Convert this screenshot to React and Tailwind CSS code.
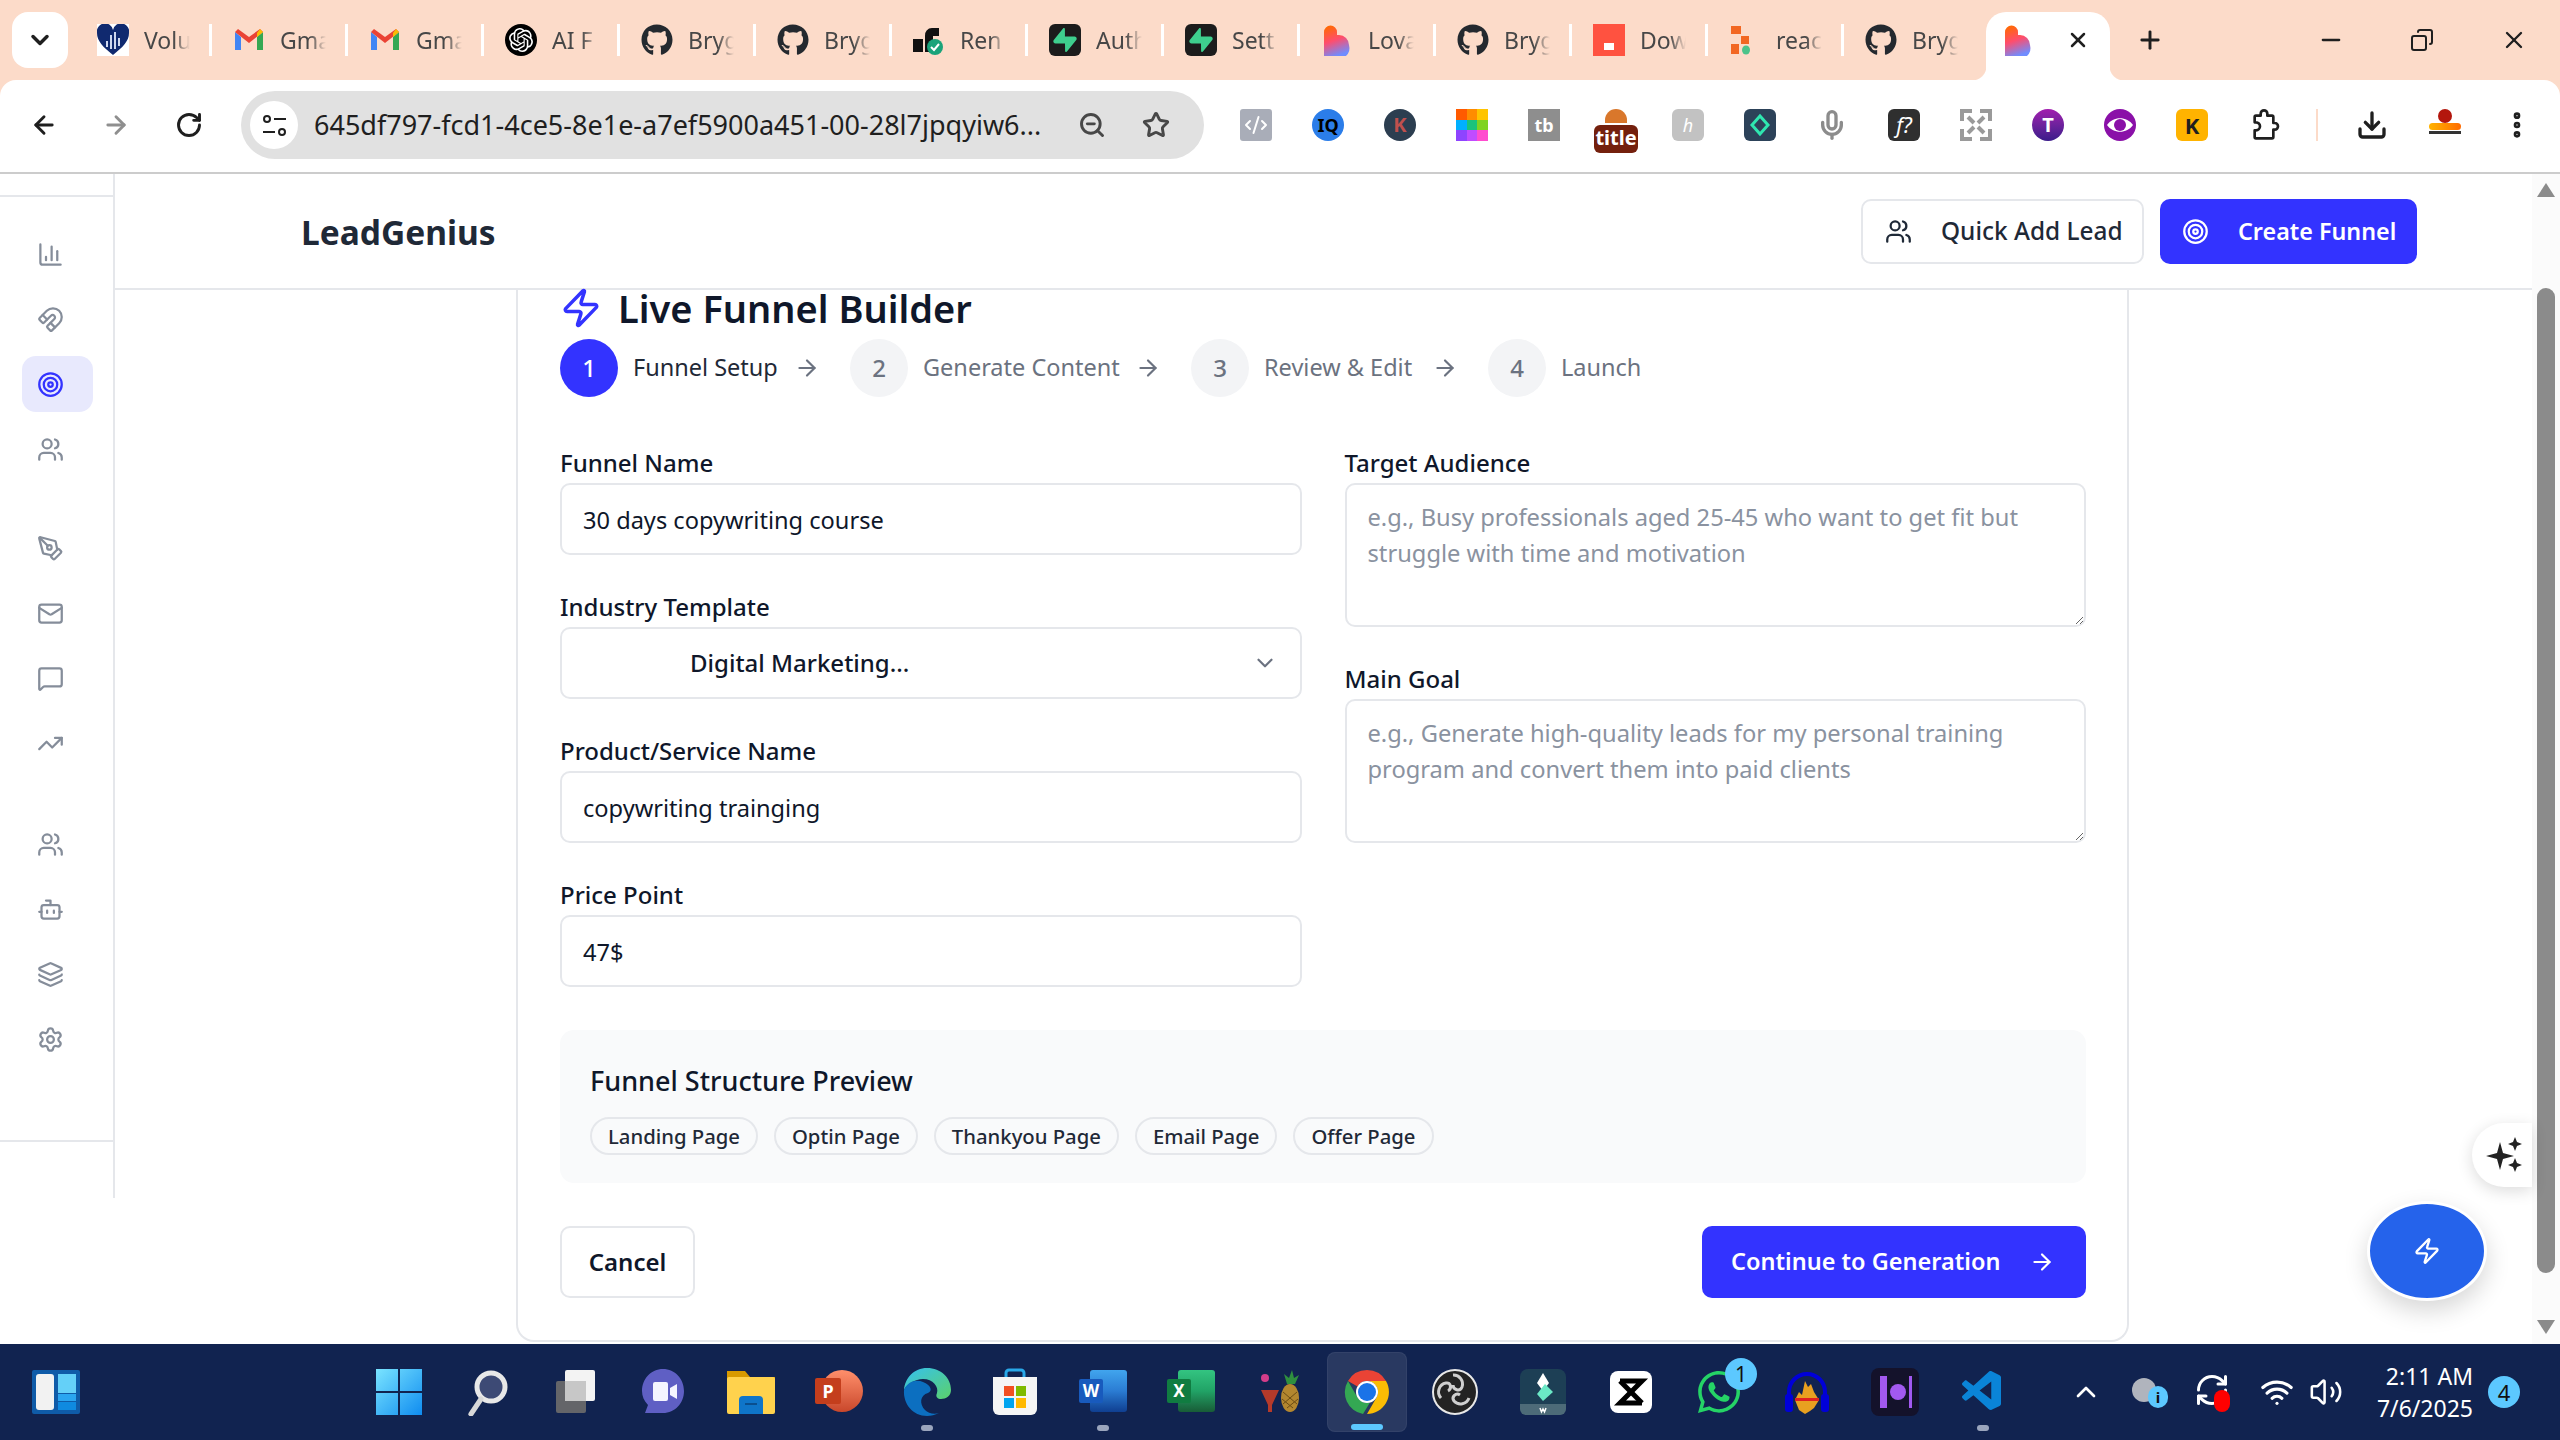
import React from 'react';
import {
  ArrowLeft, ArrowRight, RotateCw, Star, ZoomOut, MoreVertical, Plus, X, Minus, ChevronDown,
  ChartColumn, Magnet, Target, Users, PenTool, Mail, MessageSquare, TrendingUp, Bot, Layers, Settings,
  Zap, Mic, ChevronUp, Wifi, Volume2, RefreshCw, Download, Copy, Code2,
} from 'lucide-react';
import { FaGithub, FaWhatsapp } from 'react-icons/fa';
import { SiOpenai, SiSupabase } from 'react-icons/si';
import { VscVscode } from 'react-icons/vsc';

const font = 'font-["Noto_Sans",sans-serif]';

const GmailIcon = () => (
  <svg viewBox="0 0 32 32" className="w-8 h-8">
    <path fill="#4285f4" d="M2 8v18h6V13z" />
    <path fill="#34a853" d="M24 13v13h6V8z" />
    <path fill="#ea4335" d="M2 8l14 11 14-11-3-3-11 8L5 5z" />
    <path fill="#fbbc04" d="M24 9l3-4 3 3-6 5z" />
  </svg>
);

const LovableIcon = ({ id }) => (
  <svg viewBox="0 0 32 32" className="w-8 h-8">
    <defs>
      <linearGradient id={id} x1="0.2" y1="0" x2="0.5" y2="1">
        <stop offset="0" stopColor="#ff6a00" />
        <stop offset="0.5" stopColor="#ff4d6d" />
        <stop offset="1" stopColor="#6f8cff" />
      </linearGradient>
    </defs>
    <path fill={`url(#${id})`} d="M3 8a6.500 6.500 0 0 1 13 0v3h2a10 10 0 0 1 10 10 11 11 0 0 1-3 11H3z" />
  </svg>
);

const VoluIcon = () => (
  <span className="w-8 h-8 bg-white flex items-center justify-center">
    <svg viewBox="0 0 32 32" className="w-8 h-8">
      <path fill="#10296f" d="M16 31C6 23 0 17 0 9a8 8 0 0 1 16-3 8 8 0 0 1 16 3c0 8-6 14-16 22z" />
      <path fill="#cfd8ef" d="M9 17h2v6H9zM13 11h2v14h-2zM17 8h2v17h-2zM21 14h2v8h-2z" />
    </svg>
  </span>
);

const RenderIcon = () => (
  <svg viewBox="0 0 32 32" className="w-8 h-8">
    <path fill="#111" d="M0 15h10v13H0zM12 28V12a7 7 0 0 1 7-8h7v8h-6v16z" />
    <circle cx="22" cy="23" r="8" fill="#1aa37a" />
    <path d="M18 23l3 3 5-6" fill="none" stroke="#fff" strokeWidth="2" />
  </svg>
);

const SupabaseTab = () => (
  <span className="w-8 h-8 rounded-[6px] bg-[#1c1c1c] flex items-center justify-center">
    <SiSupabase className="w-6 h-6 text-[#3ecf8e]" />
  </span>
);

const DownIcon = () => (
  <span className="w-8 h-8 bg-[#ff5240] flex items-end justify-center pb-[6px]">
    <span className="w-[10px] h-[7px] bg-white" />
  </span>
);

const ReactIcon = () => (
  <svg viewBox="0 0 32 32" className="w-8 h-8">
    <path fill="#f26722" d="M2 2h10v8H2zM12 12h8v8h-8zM2 20h8v10H2z" />
    <ellipse cx="17" cy="26" rx="4" ry="4.500" fill="#4cc38a" />
  </svg>
);

const GH = () => <FaGithub className="w-8 h-8 text-[#24292f]" />;
const AI = () => (
  <span className="w-8 h-8 rounded-full bg-black flex items-center justify-center">
    <SiOpenai className="w-6 h-6 text-white" />
  </span>
);

const tabs = [
  { title: 'Volu', icon: <VoluIcon /> },
  { title: 'Gma', icon: <GmailIcon /> },
  { title: 'Gma', icon: <GmailIcon /> },
  { title: 'AI F', icon: <AI /> },
  { title: 'Bryg', icon: <GH /> },
  { title: 'Bryg', icon: <GH /> },
  { title: 'Ren', icon: <RenderIcon /> },
  { title: 'Auth', icon: <SupabaseTab /> },
  { title: 'Sett', icon: <SupabaseTab /> },
  { title: 'Lova', icon: <LovableIcon id="lov1" /> },
  { title: 'Bryg', icon: <GH /> },
  { title: 'Dow', icon: <DownIcon /> },
  { title: 'reac', icon: <ReactIcon /> },
  { title: 'Bryg', icon: <GH /> },
];

const TabStrip = () => (
  <div className="h-[80px] bg-[#fcdbc9] flex pt-[12px] shrink-0">
    <div className="ml-[12px] mr-[8px] w-[56px] h-[56px] rounded-[16px] bg-white flex items-center justify-center">
      <ChevronDown className="w-7 h-7 text-[#1f1f1f]" strokeWidth={3} />
    </div>
    {tabs.map((t, i) => (
      <div key={i} className="w-[136px] h-[32px] mt-[12px] pl-[21px] flex items-center relative">
        <span className="w-8 h-8 shrink-0 flex items-center justify-center">{t.icon}</span>
        <span className="ml-[15px] w-[46px] overflow-hidden whitespace-nowrap text-[23px] text-[#474747] [mask-image:linear-gradient(to_right,black_65%,transparent)]">
          {t.title}
        </span>
        {i < 13 && <span className="absolute right-0 top-0 w-[3px] h-[32px] bg-white" />}
      </div>
    ))}
    <div className="ml-[6px] w-[124px] h-[68px] rounded-t-[20px] bg-white flex items-start pt-[12px] pl-[16px] relative">
      <LovableIcon id="lov2" />
      <X className="ml-[32px] mt-[4px] w-6 h-6 text-[#1f1f1f]" strokeWidth={2.5} />
      <span className="absolute -left-[14px] bottom-0 w-[14px] h-[14px] bg-[radial-gradient(circle_at_0_0,#fcdbc9_14px,white_15px)]" />
      <span className="absolute -right-[14px] bottom-0 w-[14px] h-[14px] bg-[radial-gradient(circle_at_100%_0,#fcdbc9_14px,white_15px)]" />
    </div>
    <Plus className="ml-[26px] mt-[14px] w-7 h-7 text-[#1f1f1f]" strokeWidth={2.5} />
    <Minus className="ml-[153px] mt-[14px] w-7 h-7 text-[#1f1f1f]" strokeWidth={2} />
    <Copy className="ml-[65px] mt-[16px] w-6 h-6 text-[#1f1f1f] -scale-x-100" strokeWidth={2} />
    <X className="ml-[66px] mt-[14px] w-7 h-7 text-[#1f1f1f]" strokeWidth={2} />
  </div>
);

const Ext = ({ className, children }) => (
  <span className={`w-8 h-8 flex items-center justify-center text-white font-bold text-[18px] leading-none ${className}`}>{children}</span>
);

const extensions = [
  <Ext className="rounded-[3px] bg-[#a9adb8]"><Code2 className="w-6 h-6" /></Ext>,
  <Ext className="rounded-full bg-[#2b7de9] text-[13px] !text-black">IQ</Ext>,
  <Ext className="rounded-full bg-[#2c3e50] !text-[#c0504d] text-[20px]">K</Ext>,
  <span className="w-8 h-8 grid grid-cols-3 grid-rows-3">
    {['#ff5a00', '#ff8c00', '#ffc400', '#00b0ff', '#19c37d', '#7ed321', '#8e44ff', '#c04cff', '#ff4ccf'].map((c) => (
      <span key={c} style={{ backgroundColor: c }} />
    ))}
  </span>,
  <Ext className="bg-[#8e8e8e] text-[18px]">tb</Ext>,
  <span className="w-[44px] -mx-[6px] h-[44px] -mb-[12px] flex flex-col items-center">
    <span className="w-[22px] h-[14px] rounded-t-full bg-[#d9772b]" />
    <span className="w-[44px] h-[28px] mt-[2px] rounded-[6px] bg-[#74200d] text-white text-[20px] font-bold leading-[26px] text-center">title</span>
  </span>,
  <Ext className="rounded-[6px] bg-[#c2c2c2] font-normal italic">h</Ext>,
  <Ext className="rounded-[6px] bg-[#2c4259]">
    <svg viewBox="0 0 24 24" className="w-6 h-6"><path d="M12 3l8 9-8 9-8-9z" fill="none" stroke="#2fe6b0" strokeWidth="3" /></svg>
  </Ext>,
  <Mic className="w-8 h-8 text-[#8c8c8c]" strokeWidth={2.5} />,
  <Ext className="rounded-[6px] bg-[#2f2f2f] italic font-normal text-[21px]">f?</Ext>,
  <svg viewBox="0 0 32 32" className="w-8 h-8" fill="none" stroke="#9a9a9a" strokeWidth="4">
    <path d="M2 12V2h10M30 12V2H20M2 20v10h10M30 20v10H20M8 8l6 6M24 8l-6 6M8 24l6-6M24 24l-6-6" />
  </svg>,
  <Ext className="rounded-full bg-gradient-to-b from-[#a21caf] to-[#3b1a8a] text-[20px]">T</Ext>,
  <svg viewBox="0 0 32 32" className="w-8 h-8">
    <circle cx="16" cy="16" r="16" fill="#8a10a8" />
    <path d="M3 16c6-9 20-9 26 0-6 9-20 9-26 0z" fill="#fff" />
    <circle cx="16" cy="16" r="6" fill="#8a10a8" />
  </svg>,
  <Ext className="rounded-[6px] bg-[#ffb300] !text-[#1f1f1f] text-[22px]">K</Ext>,
  <svg viewBox="0 0 24 24" className="w-8 h-8" fill="none" stroke="#1f1f1f" strokeWidth="2" strokeLinejoin="round">
    <path d="M6 5h3.500V3.500a2.500 2.500 0 0 1 5 0V5H18a1 1 0 0 1 1 1v4.500h1a2.500 2.500 0 0 1 0 5h-1V21a1 1 0 0 1-1 1H6a1 1 0 0 1-1-1v-5h1a3 3 0 0 0 0-6H5V6a1 1 0 0 1 1-1z" />
  </svg>,
];

const Toolbar = () => (
  <div className="h-[94px] bg-[#fcdbc9] shrink-0">
    <div className="h-[94px] bg-white rounded-t-[16px] border-b-2 border-[#cccccc] flex items-center pb-[2px]">
      <ArrowLeft className="ml-[30px] w-7 h-7 text-[#1f1f1f]" strokeWidth={2.5} />
      <ArrowRight className="ml-[44px] w-7 h-7 text-[#8f8f8f]" strokeWidth={2.5} />
      <RotateCw className="ml-[45px] w-7 h-7 text-[#1f1f1f]" strokeWidth={2.5} />
      <div className="ml-[38px] w-[963px] h-[68px] rounded-full bg-[#e1e1e1] flex items-center pl-[9px]">
        <span className="w-[48px] h-[48px] rounded-full bg-white flex flex-col items-center justify-center gap-[5px]">
          <span className="flex items-center gap-[3px]"><span className="w-[8px] h-[8px] rounded-full border-2 border-[#1f1f1f]" /><span className="w-[12px] h-[2px] bg-[#1f1f1f]" /></span>
          <span className="flex items-center gap-[3px]"><span className="w-[12px] h-[2px] bg-[#1f1f1f]" /><span className="w-[8px] h-[8px] rounded-full border-2 border-[#1f1f1f]" /></span>
        </span>
        <span className="ml-[16px] w-[730px] text-[27px] text-[#1f1f1f] whitespace-nowrap overflow-hidden">645df797-fcd1-4ce5-8e1e-a7ef5900a451-00-28l7jpqyiw6...</span>
        <ZoomOut className="ml-[34px] w-7 h-7 text-[#474747]" strokeWidth={2.5} />
        <Star className="ml-[36px] w-7 h-7 text-[#474747]" strokeWidth={2.5} />
      </div>
      <div className="ml-[36px] flex items-center gap-[40px]">
        {extensions.map((e, i) => (
          <span key={i} className="w-8 h-8 flex justify-center">{e}</span>
        ))}
      </div>
      <span className="ml-[36px] w-[2px] h-[32px] bg-[#fcdbc9]" />
      <Download className="ml-[38px] w-8 h-8 text-[#1f1f1f]" strokeWidth={2.5} />
      <span className="ml-[41px] w-8 h-8 flex flex-col items-center justify-start">
        <span className="w-[14px] h-[14px] rounded-full bg-[#b3160d]" />
        <span className="w-[32px] h-[7px] rounded-full bg-gradient-to-r from-[#ffb300] to-[#ff6a00]" />
        <span className="w-[32px] h-[3px] mt-[1px] bg-[#333]" />
      </span>
      <MoreVertical className="ml-[40px] w-8 h-8 text-[#1f1f1f]" strokeWidth={3} />
    </div>
  </div>
);

const NavIcon = ({ icon: Icon, active, className = '' }) => (
  <div className={`ml-[22px] w-[71px] h-[56px] mb-[9px] pl-[15px] flex items-center rounded-[14px] ${active ? 'bg-[#e8e9fd]' : ''} ${className}`}>
    <Icon className={`w-[27px] h-[27px] ${active ? 'text-[#3333ff]' : 'text-[#858d9a]'}`} strokeWidth={2} />
  </div>
);

const Sidebar = () => (
  <aside className="w-[115px] h-[1024px] border-r-2 border-[#e5e7eb] flex flex-col shrink-0">
    <div className="h-[23px] border-b-2 border-[#e5e7eb]" />
    <div className="pt-[29px]">
      <NavIcon icon={ChartColumn} />
      <NavIcon icon={Magnet} />
      <NavIcon icon={Target} active />
      <NavIcon icon={Users} />
      <div className="h-[34px]" />
      <NavIcon icon={PenTool} />
      <NavIcon icon={Mail} />
      <NavIcon icon={MessageSquare} />
      <NavIcon icon={TrendingUp} />
      <div className="h-[36px]" />
      <NavIcon icon={Users} />
      <NavIcon icon={Bot} />
      <NavIcon icon={Layers} />
      <NavIcon icon={Settings} />
    </div>
    <div className="mt-auto h-[58px] border-t-2 border-[#e5e7eb]" />
  </aside>
);

const Header = () => (
  <header className="h-[116px] border-b-2 border-[#e5e7eb] flex items-center pl-[186px] pr-[115px] shrink-0">
    <span className="text-[33.500px] font-bold text-[#1f2937] leading-none mt-[4px]">LeadGenius</span>
    <div className="ml-auto flex items-center gap-[16px]">
      <button className="w-[283px] h-[65px] rounded-[10px] border-2 border-[#e5e7eb] flex items-center pl-[22px] text-[24.400px] font-medium text-[#1f2937]">
        <Users className="w-[27px] h-[27px]" strokeWidth={2} />
        <span className="ml-[29px] whitespace-nowrap">Quick Add Lead</span>
      </button>
      <button className="w-[257px] h-[65px] rounded-[10px] bg-[#3333ff] flex items-center pl-[22px] text-[23.300px] font-semibold text-white">
        <Target className="w-[27px] h-[27px]" strokeWidth={2} />
        <span className="ml-[29px] whitespace-nowrap">Create Funnel</span>
      </button>
    </div>
  </header>
);

const steps = [
  { name: 'Funnel Setup', width: 'w-[144px]' },
  { name: 'Generate Content', width: 'w-[195px]' },
  { name: 'Review & Edit', width: 'w-[151px]' },
  { name: 'Launch', width: 'w-[78px]' },
];

const Stepper = () => (
  <div className="mt-[13px] h-[58px] flex items-center">
    {steps.map((s, i) => (
      <div key={s.name} className="flex items-center">
        <span className={`w-[58px] h-[58px] rounded-full flex items-center justify-center text-[24px] font-medium ${i === 0 ? 'bg-[#3333ff] text-white' : 'bg-[#f3f4f6] text-[#6b7280]'}`}>{i + 1}</span>
        <span className={`ml-[15px] ${s.width} text-[23.500px] whitespace-nowrap ${i === 0 ? 'text-[#1f2937]' : 'text-[#6b7280]'}`}>{s.name}</span>
        {i < 3 && <ArrowRight className="ml-[17px] mr-[30px] w-[26px] h-[26px] text-[#6b7280]" strokeWidth={2} />}
      </div>
    ))}
  </div>
);

const Label = ({ children }) => (
  <label className="block h-[34px] mb-[3px] text-[24px] leading-[34px] font-medium text-[#0f172a]">{children}</label>
);

const Field = ({ label, value }) => (
  <div>
    <Label>{label}</Label>
    <input readOnly value={value} className="w-full h-[72px] rounded-[10px] border-2 border-[#e5e7eb] bg-white px-[21px] pt-[1px] text-[23.600px] text-[#0f172a] outline-none" />
  </div>
);

const AreaField = ({ label, placeholder }) => (
  <div>
    <Label>{label}</Label>
    <textarea readOnly placeholder={placeholder} className="block w-full h-[144px] rounded-[10px] border-2 border-[#e5e7eb] bg-white px-[21px] py-[14px] text-[23.700px] leading-[36px] text-[#0f172a] placeholder:text-[#8a92a0] outline-none resize-y" />
  </div>
);

const pages = ['Landing Page', 'Optin Page', 'Thankyou Page', 'Email Page', 'Offer Page'];

const Builder = () => (
  <div className="flex-1">
    <div className="ml-[401px] w-[1613px] h-[1052px] border-x-2 border-b-2 border-[#e5e7eb] rounded-b-[18px] pl-[42px] pr-[41px]">
      <h1 className="h-[36px] flex items-center text-[38px] font-semibold text-[#0f172a] leading-none whitespace-nowrap">
        <Zap className="w-[42px] h-[42px] text-[#3333ff] shrink-0" strokeWidth={2} />
        <span className="ml-[16px]">Live Funnel Builder</span>
      </h1>
      <Stepper />
      <div className="mt-[49px] grid grid-cols-2 gap-x-[43px]">
        <div className="flex flex-col gap-[35px]">
          <Field label="Funnel Name" value="30 days copywriting course" />
          <div>
            <Label>Industry Template</Label>
            <div className="h-[72px] rounded-[10px] border-2 border-[#e5e7eb] flex items-center pl-[128px] pr-[22px] text-[24px] font-medium text-[#0f172a]">
              <span>Digital Marketing...</span>
              <ChevronDown className="ml-auto w-[26px] h-[26px] text-[#6b7280]" strokeWidth={2} />
            </div>
          </div>
          <Field label="Product/Service Name" value="copywriting trainging" />
          <Field label="Price Point" value="47$" />
        </div>
        <div className="flex flex-col gap-[35px]">
          <AreaField label="Target Audience" placeholder={'e.g., Busy professionals aged 25-45 who want to get fit but\nstruggle with time and motivation'} />
          <AreaField label="Main Goal" placeholder={'e.g., Generate high-quality leads for my personal training\nprogram and convert them into paid clients'} />
        </div>
      </div>
      <div className="mt-[43px] h-[153px] rounded-[14px] bg-[#f9fafb] px-[30px] pt-[32px]">
        <h3 className="h-[38px] text-[27px] leading-[38px] font-medium text-[#0f172a]">Funnel Structure Preview</h3>
        <div className="mt-[17px] flex gap-[16px]">
          {pages.map((p) => (
            <span key={p} className="h-[38px] px-[16px] rounded-full border-2 border-[#e5e7eb] flex items-center text-[20.300px] font-medium text-[#1f2937] whitespace-nowrap">{p}</span>
          ))}
        </div>
      </div>
      <div className="mt-[43px] flex justify-between">
        <button className="w-[135px] h-[72px] rounded-[10px] border-2 border-[#e5e7eb] text-[24px] font-semibold text-[#0f172a]">Cancel</button>
        <button className="w-[384px] h-[72px] rounded-[10px] bg-[#3333ff] flex items-center pl-[29px] text-[23.500px] font-semibold text-white">
          <span className="whitespace-nowrap">Continue to Generation</span>
          <ArrowRight className="ml-auto mr-[31px] w-[26px] h-[26px]" strokeWidth={2} />
        </button>
      </div>
    </div>
  </div>
);

const Scrollbar = () => (
  <div className="w-[28px] shrink-0 bg-[#fbfbfb] flex flex-col items-center relative">
    <span className="mt-[9px] w-0 h-0 border-x-[9px] border-x-transparent border-b-[14px] border-b-[#8b8b8b]" />
    <span className="mt-[91px] w-[18px] h-[985px] rounded-full bg-[#8b8b8b]" />
    <span className="mt-[47px] w-0 h-0 border-x-[9px] border-x-transparent border-t-[14px] border-t-[#8b8b8b]" />
  </div>
);

const WinLogo = () => (
  <svg viewBox="0 0 48 48" className="w-[48px] h-[48px]">
    <defs>
      <linearGradient id="win" x1="0" y1="0" x2="1" y2="1">
        <stop offset="0" stopColor="#7ae4ff" />
        <stop offset="1" stopColor="#0f8cf0" />
      </linearGradient>
    </defs>
    <path fill="url(#win)" d="M1 1h22v22H1zM25 1h22v22H25zM1 25h22v22H1zM25 25h22v22H25z" />
  </svg>
);

const TaskIcons = {
  search: (
    <svg viewBox="0 0 48 48" className="w-[48px] h-[48px]">
      <circle cx="28" cy="19" r="14" fill="#3d4a75" stroke="#e8e8e8" strokeWidth="5" />
      <path d="M18 31L8 46" stroke="#d8d8d8" strokeWidth="5" strokeLinecap="round" />
    </svg>
  ),
  taskview: (
    <svg viewBox="0 0 48 48" className="w-[48px] h-[48px]">
      <rect x="14" y="2" width="30" height="31" rx="2" fill="#f3f3f3" />
      <rect x="5" y="13" width="30" height="32" rx="2" fill="#6b6b6b" fillOpacity="0.92" />
      <rect x="14" y="13" width="21" height="20" fill="#c7c7c7" />
    </svg>
  ),
  meet: (
    <svg viewBox="0 0 48 48" className="w-[48px] h-[48px]">
      <path fill="#5f5fc4" d="M24 1c12 0 21 10 21 22s-9 22-21 22H6l3-8C5 33 3 28 3 23 3 11 12 1 24 1z" />
      <rect x="14" y="14" width="15" height="19" rx="2" fill="#f5f5ff" />
      <path d="M31 20l7-4v15l-7-4z" fill="#f5f5ff" />
    </svg>
  ),
  explorer: (
    <svg viewBox="0 0 48 48" className="w-[48px] h-[48px]">
      <path fill="#d89a00" d="M0 3h18l5 6h25v10H0z" />
      <rect y="9" width="48" height="37" rx="2" fill="#ffd24d" />
      <path fill="#0f75c9" d="M12 32a4 4 0 0 1 4-4h16a4 4 0 0 1 4 4v14H12z" />
      <rect x="18" y="35" width="12" height="2" fill="#0a4f8f" />
    </svg>
  ),
  ppt: (
    <div className="relative w-[48px] h-[48px]">
      <span className="absolute left-[6px] top-[2px] w-[42px] h-[42px] rounded-full bg-gradient-to-b from-[#ff8f6b] to-[#c9472b]" />
      <span className="absolute left-0 top-[10px] w-[26px] h-[26px] rounded-[2px] bg-[#c43e1c] text-white text-[18px] font-bold leading-[26px] text-center">P</span>
    </div>
  ),
  edge: (
    <svg viewBox="0 0 48 48" className="w-[48px] h-[48px]">
      <defs>
        <linearGradient id="edg" x1="0" y1="0" x2="1" y2="1">
          <stop offset="0" stopColor="#35c1f1" />
          <stop offset="1" stopColor="#5bd06b" />
        </linearGradient>
      </defs>
      <path fill="url(#edg)" d="M24 0c14 0 24 10 24 22 0 6-5 9-10 9-3 0-6-2-4-6 2-6-4-14-14-14C12 11 4 16 1 22 2 10 11 0 24 0z" />
      <path fill="#0c6fc0" d="M1 22c3-8 12-11 19-8 8 3 10 9 5 11-8 2-9 11-3 17 3 3 9 5 14 3-4 2-8 3-12 3C10 48 0 36 1 22z" />
    </svg>
  ),
  store: (
    <svg viewBox="0 0 48 48" className="w-[48px] h-[48px]">
      <path d="M15 10V5a3 3 0 0 1 3-3h12a3 3 0 0 1 3 3v5" fill="none" stroke="#29a8e8" strokeWidth="3" />
      <path fill="#f5f5f5" d="M2 9h44v32a6 6 0 0 1-6 6H8a6 6 0 0 1-6-6z" />
      <rect x="13" y="18" width="10" height="10" fill="#f25022" />
      <rect x="25" y="18" width="10" height="10" fill="#7fba00" />
      <rect x="13" y="30" width="10" height="10" fill="#00a4ef" />
      <rect x="25" y="30" width="10" height="10" fill="#ffb900" />
    </svg>
  ),
  word: (
    <div className="relative w-[48px] h-[48px]">
      <span className="absolute left-[11px] top-[2px] w-[37px] h-[42px] rounded-[3px] bg-gradient-to-b from-[#41a5ee] via-[#2b7cd3] to-[#103f91]" />
      <span className="absolute left-0 top-[11px] w-[24px] h-[24px] rounded-[2px] bg-[#185abd] text-white text-[17px] font-bold leading-[24px] text-center">W</span>
    </div>
  ),
  excel: (
    <div className="relative w-[48px] h-[48px]">
      <span className="absolute left-[11px] top-[2px] w-[37px] h-[42px] rounded-[3px] bg-gradient-to-b from-[#33c481] via-[#21a366] to-[#185c37]" />
      <span className="absolute left-0 top-[11px] w-[24px] h-[24px] rounded-[2px] bg-[#107c41] text-white text-[17px] font-bold leading-[24px] text-center">X</span>
    </div>
  ),
  pineapple: (
    <svg viewBox="0 0 48 48" className="w-[48px] h-[48px]">
      <path d="M6 22h18l-7 15v7h-4v-7z" fill="#b53a2a" />
      <circle cx="10" cy="10" r="4" fill="#d43d8a" />
      <path d="M32 16l-3-10 5 4 3-8 2 8 5-3-4 9z" fill="#2f8f3e" />
      <ellipse cx="35" cy="30" rx="9" ry="14" fill="#b4872f" />
      <path d="M28 24l14 12M42 24L28 36M27 31l11 9M43 31l-11 9" stroke="#6d4d14" strokeWidth="1" />
    </svg>
  ),
  chrome: (
    <svg viewBox="0 0 48 48" className="w-[48px] h-[48px]">
      <path fill="#ea4335" d="M24 2a22 22 0 0 1 19 11H24a11 11 0 0 0-9.500 5.500L5 13A22 22 0 0 1 24 2z" />
      <path fill="#34a853" d="M5 13l9.500 16.500a11 11 0 0 0 12.500 5L20 46A22 22 0 0 1 5 13z" />
      <path fill="#fbbc04" d="M43 13H24a11 11 0 0 1 9.500 16.500L24 46A22 22 0 0 0 43 13z" />
      <circle cx="24" cy="24" r="11" fill="#fff" />
      <circle cx="24" cy="24" r="9" fill="#1a73e8" />
    </svg>
  ),
  obs: (
    <svg viewBox="0 0 48 48" className="w-[48px] h-[48px]">
      <circle cx="24" cy="24" r="22" fill="#232323" stroke="#e8e8e8" strokeWidth="2" />
      <path d="M22 7a9 9 0 0 1 9 12c-2 5-9 3-9-2M38 30a9 9 0 0 1-15 3c-3-4 2-9 6-6M10 30a9 9 0 0 1 5-15c5-1 6 6 2 8" fill="none" stroke="#cfcfcf" strokeWidth="3" />
    </svg>
  ),
  filmora: (
    <svg viewBox="0 0 48 48" className="w-[48px] h-[48px]">
      <rect x="1" y="1" width="46" height="46" rx="8" fill="#1d3f55" />
      <path d="M24 5l6 10-6 8-6-8z" fill="#fff" />
      <path d="M26 16l8 8-10 9-6-7z" fill="#6be8c6" />
      <path d="M1 36h46v5a6 6 0 0 1-6 6H7a6 6 0 0 1-6-6z" fill="#4d6b78" />
      <path d="M21 40l1.500 4 1.500-3 1.500 3 1.500-4" stroke="#fff" strokeWidth="1.500" fill="none" />
    </svg>
  ),
  capcut: (
    <svg viewBox="0 0 48 48" className="w-[48px] h-[48px]">
      <rect x="3" y="3" width="42" height="42" rx="8" fill="#fff" />
      <path d="M13 13h22L13 35h22" fill="none" stroke="#000" strokeWidth="5" />
      <path d="M13 13l22 22" stroke="#000" strokeWidth="5" />
    </svg>
  ),
  audacity: (
    <svg viewBox="0 0 48 48" className="w-[48px] h-[48px]">
      <path d="M6 36V24a18 18 0 0 1 36 0v12" fill="none" stroke="#0000d8" strokeWidth="4" />
      <rect x="2" y="26" width="8" height="18" rx="3" fill="#0000d8" />
      <rect x="38" y="26" width="8" height="18" rx="3" fill="#0000d8" />
      <path d="M12 32l4-8 3 3 3-14 3 6 3-3 3 8 5 8-5 8-4 3-5 3-6-4z" fill="#e8a020" />
      <rect x="12" y="30" width="24" height="3" fill="#e02020" />
    </svg>
  ),
  purple: (
    <svg viewBox="0 0 48 48" className="w-[48px] h-[48px]">
      <rect width="48" height="48" rx="8" fill="#14122b" />
      <rect x="9" y="8" width="7" height="32" fill="#a259ef" />
      <rect x="38" y="8" width="3" height="32" fill="#a259ef" />
      <ellipse cx="27" cy="24" rx="8" ry="8" fill="#a259ef" />
    </svg>
  ),
};

const Cell = ({ children, dot, className = '' }) => (
  <div className={`w-[88px] h-[96px] flex justify-center pt-[24px] relative ${className}`}>
    {children}
    {dot && <span className="absolute bottom-[9px] left-[38px] w-[12px] h-[6px] rounded-full bg-[#9aa5bd]" />}
  </div>
);

const Taskbar = () => (
  <div className="h-[96px] bg-[#112350] flex text-white shrink-0 relative">
    <div className="ml-[32px] mt-[26px] w-[48px] h-[44px] bg-[#0f5ba8] flex gap-[4px] p-[4px] rounded-[2px]">
      <span className="w-[18px] h-[36px] rounded-[3px] bg-[#f2f2f2]" />
      <span className="w-[18px] h-[36px] flex flex-col gap-[1px]">
        <span className="h-[20px] bg-[#64d0f8]" />
        <span className="h-[7px] bg-[#2aa5f0]" />
        <span className="h-[8px] bg-[#0f8ae0]" />
      </span>
    </div>
    <div className="ml-[275px] flex">
      <Cell><WinLogo /></Cell>
      <Cell>{TaskIcons.search}</Cell>
      <Cell>{TaskIcons.taskview}</Cell>
      <Cell>{TaskIcons.meet}</Cell>
      <Cell>{TaskIcons.explorer}</Cell>
      <Cell>{TaskIcons.ppt}</Cell>
      <Cell dot>{TaskIcons.edge}</Cell>
      <Cell>{TaskIcons.store}</Cell>
      <Cell dot>{TaskIcons.word}</Cell>
      <Cell>{TaskIcons.excel}</Cell>
      <Cell>{TaskIcons.pineapple}</Cell>
      <Cell>
        <span className="absolute left-[4px] top-[8px] w-[80px] h-[80px] rounded-[8px] bg-white/10 border border-white/5" />
        <span className="relative">{TaskIcons.chrome}</span>
        <span className="absolute left-[28px] bottom-[10px] w-[32px] h-[6px] rounded-full bg-[#5cc8ff]" />
      </Cell>
      <Cell>{TaskIcons.obs}</Cell>
      <Cell>{TaskIcons.filmora}</Cell>
      <Cell>{TaskIcons.capcut}</Cell>
      <Cell>
        <FaWhatsapp className="w-[48px] h-[48px] text-[#25d366]" />
        <span className="absolute left-[50px] top-[14px] w-[32px] h-[32px] rounded-full bg-[#5cc8ff] text-[#111] text-[21px] leading-[32px] text-center">1</span>
      </Cell>
      <Cell>{TaskIcons.audacity}</Cell>
      <Cell>{TaskIcons.purple}</Cell>
      <Cell dot><VscVscode className="w-[48px] h-[48px] text-[#0a84d8]" /></Cell>
    </div>
    <div className="ml-[43px] flex items-center h-[96px]">
      <ChevronUp className="w-8 h-8 text-white" strokeWidth={2} />
      <span className="ml-[30px] relative w-[36px] h-[32px]">
        <span className="absolute left-0 top-[2px] w-[24px] h-[24px] rounded-full bg-[#b0b4bd]" />
        <span className="absolute right-0 bottom-0 w-[20px] h-[22px] rounded-full bg-[#5cc8ff] text-[#111] text-[15px] font-bold leading-[22px] text-center">i</span>
      </span>
      <span className="ml-[26px] relative w-[36px] h-[40px]">
        <RefreshCw className="w-[36px] h-[36px] text-white" strokeWidth={2} />
        <span className="absolute right-0 bottom-0 w-[16px] h-[22px] rounded-full bg-[#ff0000]" />
      </span>
      <Wifi className="ml-[30px] w-[34px] h-[34px] text-white" strokeWidth={2.2} />
      <Volume2 className="ml-[15px] w-[34px] h-[34px] text-white" strokeWidth={1.8} />
      <div className="ml-[26px] w-[104px] text-right text-[23px] leading-[32px] whitespace-nowrap">
        <div>2:11 AM</div>
        <div>7/6/2025</div>
      </div>
      <span className="ml-[15px] w-[32px] h-[32px] rounded-full bg-[#5cc8ff] text-[#111] text-[22px] leading-[32px] text-center">4</span>
    </div>
  </div>
);

const App = () => (
  <div className={`w-[2560px] h-[1440px] overflow-hidden flex flex-col bg-white ${font}`}>
    <TabStrip />
    <Toolbar />
    <div className="h-[1170px] flex relative overflow-hidden">
      <Sidebar />
      <div className="flex-1 flex flex-col min-w-0">
        <Header />
        <Builder />
      </div>
      <Scrollbar />
      <button className="absolute left-[2472px] top-[949px] w-[60px] h-[64px] rounded-l-full bg-white shadow-[0_4px_16px_rgba(0,0,0,0.14)] flex items-center pl-[14px]">
        <svg viewBox="0 0 36 36" className="w-[36px] h-[36px]" fill="#222">
          <path d="M14 5l3 11 11 3-11 3-3 11-3-11L0 19l11-3zM29 0l2 5 5 2-5 2-2 5-2-5-5-2 5-2zM29 21l2 5 5 2-5 2-2 5-2-5-5-2 5-2z" />
        </svg>
      </button>
      <button className="absolute left-[2367px] top-[1027px] w-[120px] h-[100px] rounded-[50%] bg-[#2563eb] border-[3px] border-white shadow-[0_10px_24px_rgba(0,0,0,0.16)] flex items-center justify-center">
        <Zap className="w-[28px] h-[28px] text-white" strokeWidth={2} />
      </button>
    </div>
    <Taskbar />
  </div>
);

export default App;
